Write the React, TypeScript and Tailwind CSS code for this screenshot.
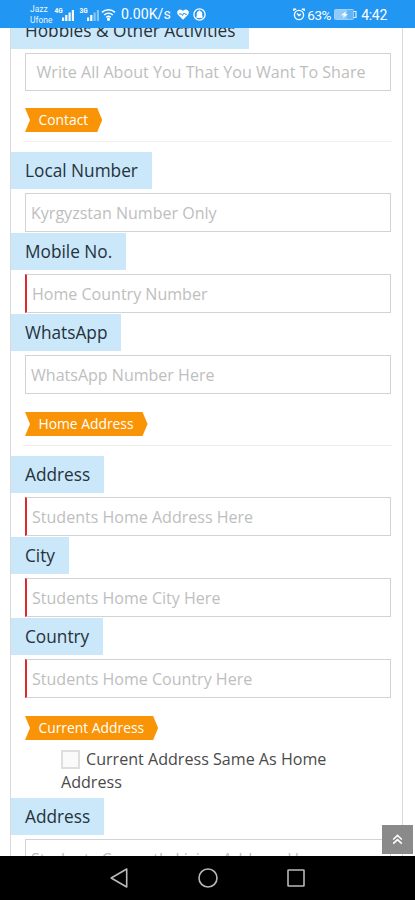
import React from 'react';
import clsx from 'clsx';

interface FieldProps {
  label: string;
  placeholder: string;
  required?: boolean;
}

const Label: React.FC<{ children: React.ReactNode }> = ({ children }) => (
  <label className="block w-fit h-[37px] px-3.5 bg-[#cae8f9] text-[17.25px] leading-[38px] text-[#26323c] whitespace-nowrap">
    {children}
  </label>
);

const Field: React.FC<FieldProps> = ({ label, placeholder, required }) => (
  <div className="h-[81px]">
    <Label>{label}</Label>
    <div className="pt-1 pl-3.5 pr-[11px]">
      <input
        type="text"
        placeholder={placeholder}
        className={clsx(
          'block w-full h-[39px] border border-[#d3d3d3] bg-white pl-[5px] text-[16.05px] outline-none placeholder:text-[#bebebe]',
          required && 'border-l-2 border-l-[#dc2a2e]'
        )}
      />
    </div>
  </div>
);

const Ribbon: React.FC<{ children: React.ReactNode }> = ({ children }) => (
  <div className="ml-3.5 w-fit h-6 pl-[13.5px] pr-[14px] bg-[#f99406] text-white text-[13.85px] leading-[23px] whitespace-nowrap [clip-path:polygon(0_0,calc(100%-5px)_0,100%_50%,calc(100%-5px)_100%,0_100%,5px_50%)]">
    {children}
  </div>
);

const Signal: React.FC<{ dim?: boolean }> = ({ dim }) => (
  <svg width="21" height="14" viewBox="0 0 21 14" fill="#fff">
    <text x="0.5" y="6" fontSize="6.5" fontWeight="700">{dim ? '3G' : '4G'}</text>
    <path d="M8 10.5h2.2V14H8z M11.2 8h2.2v6h-2.2z" />
    <path d="M14.5 5.5h2.2V14h-2.2z M17.8 3H20v11h-2.2z" opacity={dim ? 0.45 : 0.95} />
  </svg>
);

const StatusBar = () => (
  <div className="h-7 shrink-0 bg-[#2196f3] text-white flex items-center pl-[30px] pr-[28px] font-[Roboto,sans-serif]">
    <div className="w-[24px] text-[8.5px] leading-[11px] mt-[2px] opacity-90">
      <div>Jazz</div>
      <div>Ufone</div>
    </div>
    <div className="flex items-center">
      <Signal />
      <div className="w-1" />
      <Signal dim />
    </div>
    <svg className="ml-[1px] mt-px" width="15" height="13" viewBox="0 0 15 13" fill="none" stroke="#fff" strokeWidth="1.6">
      <path d="M1 4.3a9.5 9.5 0 0 1 13 0M3.2 7a6.3 6.3 0 0 1 8.6 0M5.3 9.4a3.3 3.3 0 0 1 4.4 0" />
      <circle cx="7.5" cy="11.3" r=".8" fill="#fff" />
    </svg>
    <span className="ml-[5px] w-[56px] text-[14.2px] mt-[2px]">0.00K/s</span>
    <svg className="mt-px" width="12" height="11" viewBox="0 0 12 11" fill="#fff">
      <path d="M6 10.7 1.2 6C-1 3.5.6.5 3.2.5 4.6.5 5.5 1.3 6 2 6.5 1.3 7.4.5 8.8.5c2.6 0 4.2 3 2 5.5z" />
      <path d="M2 5h2.5l1 1.5L7 4l1 1.2h2" stroke="#2196f3" fill="none" />
    </svg>
    <svg className="ml-[4px] mt-px" width="13" height="13" viewBox="0 0 13 13" fill="none" stroke="#fff" strokeWidth="1.3">
      <circle cx="6.5" cy="6.5" r="5.6" />
      <path d="M4.4 9V5.8a2.1 2.1 0 0 1 4.2 0V9z" fill="#fff" />
      <path d="M3.5 9h6M6.5 2.5v1.4" />
    </svg>
    <svg className="ml-auto mt-px" width="12" height="13" viewBox="0 0 12 13" fill="none" stroke="#fff" strokeWidth="1.4">
      <path d="M.8 3V1.2h2.4M11.2 3V1.2H8.8" />
      <circle cx="6" cy="7" r="4.6" />
      <path d="M4 5.5 6 7.5l2-1.3" />
    </svg>
    <span className="ml-[2px] w-[27px] text-[13.5px] tracking-[-0.4px] mt-[2px]">63%</span>
    <svg className="mt-px" width="23" height="11" viewBox="0 0 23 11">
      <rect x=".5" y=".5" width="19" height="10" rx="1" fill="#63b5f6" stroke="#9dd1fa" />
      <rect x="1" y="1" width="12" height="9" fill="#8ecbfa" />
      <path d="m7 6.2 5-4-.8 2.8H14L9 9l.8-2.8z" fill="#fff" />
      <path d="M20 2.5h2v6h-2" fill="none" stroke="#e4f3ff" strokeWidth="1.2" />
    </svg>
    <span className="ml-[4px] text-[14px] tracking-[-0.3px] mt-[2px]">4:42</span>
  </div>
);

const NavBar = () => (
  <div className="h-11 shrink-0 bg-black flex items-center pl-[109px]">
    <svg width="200" height="24" viewBox="0 0 200 24" fill="none" stroke="#b9b9b9" strokeWidth="1.6">
      <path d="M2.2 12 17.7 3v18z" strokeLinejoin="round" />
      <circle cx="99" cy="12" r="9" />
      <rect x="179" y="4" width="16" height="16" rx=".5" />
    </svg>
  </div>
);

const App: React.FC = () => {
  return (
    <div className="relative w-[415px] h-[900px] overflow-hidden bg-white flex flex-col font-['Open_Sans','Noto_Sans',sans-serif]">
      <StatusBar />

      <main className="h-[828px] overflow-hidden ml-[10px] mr-[12px] border-x border-[#d9d9d9]">
        <div className="-mt-4">
          <Label>Hobbies &amp; Other Activities</Label>
          <div className="pt-1 pl-3.5 pr-[11px]">
            <textarea
              rows={1}
              placeholder="Write All About You That You Want To Share"
              className="block w-full h-[38px] resize-none overflow-hidden border border-[#d3d3d3] pl-[10.5px] pt-[6px] text-[16.1px] leading-6 outline-none placeholder:text-[#bebebe]"
            />
          </div>
        </div>

        {/* Contact */}
        <div className="h-[61px] pt-[17px]">
          <Ribbon>Contact</Ribbon>
          <hr className="mt-[9px] ml-[12px] mr-[10px] border-[#f0f0f0]" />
        </div>
        <Field label="Local Number" placeholder="Kyrgyzstan Number Only" />
        <Field label="Mobile No." placeholder="Home Country Number" required />
        <Field label="WhatsApp" placeholder="WhatsApp Number Here" />

        {/* Home address */}
        <div className="h-[61px] pt-[17px]">
          <Ribbon>Home Address</Ribbon>
          <hr className="mt-[9px] ml-[12px] mr-[10px] border-[#ececec]" />
        </div>
        <Field label="Address" placeholder="Students Home Address Here" required />
        <Field label="City" placeholder="Students Home City Here" required />
        <Field label="Country" placeholder="Students Home Country Here" required />

        {/* Current address */}
        <div className="h-[99px] pt-[17px]">
          <Ribbon>Current Address</Ribbon>
          <div className="pl-[50px] pt-[8px] text-[16.1px] leading-[23px] text-[#4a4a4a]">
            <input
              type="checkbox"
              className="appearance-none inline-block align-top mt-[2px] mr-[6px] w-[19px] h-[19px] border-2 border-[#dedede] bg-[#fafafa]"
            />
            Current Address Same As Home
            <br />
            Address
          </div>
        </div>
        <Field label="Address" placeholder="Students Currently Living Address Here" />
      </main>

      <NavBar />

      <button className="absolute left-[382px] top-[825px] w-[31px] h-[29px] bg-[#8a8a8a] flex items-center justify-center">
        <svg width="11" height="11" viewBox="0 0 11 11" fill="none" stroke="#fff" strokeWidth="1.6">
          <path d="M1.2 5.5 5.5 1.4l4.3 4.1M1.2 9.7l4.3-4.1 4.3 4.1" />
        </svg>
      </button>
    </div>
  );
};

export default App;
